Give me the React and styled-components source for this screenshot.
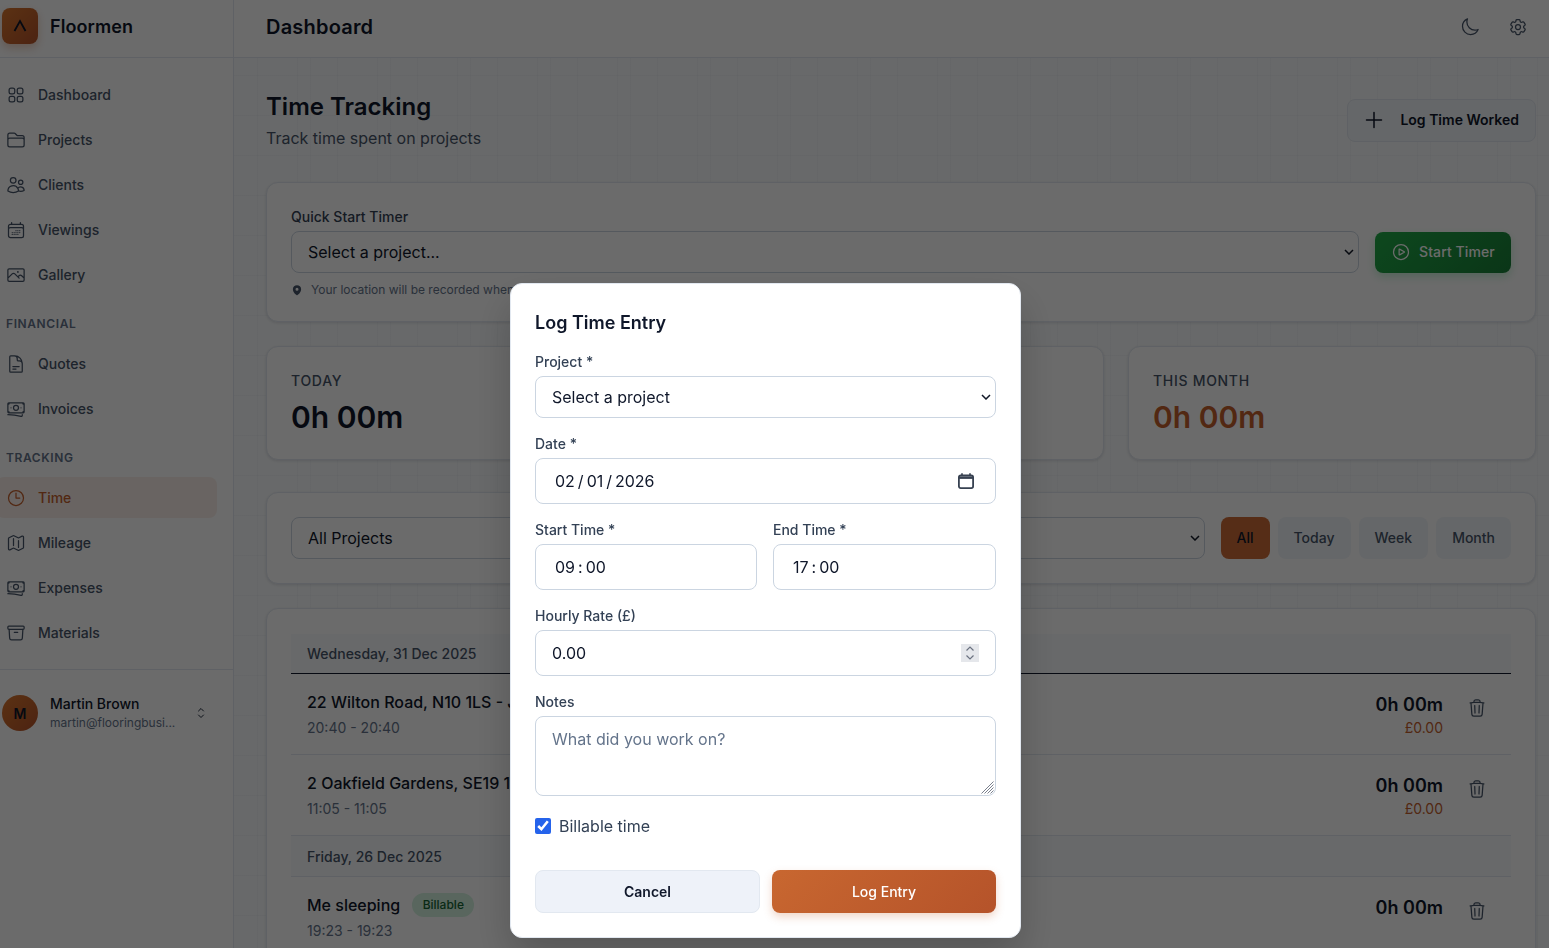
import React from 'react';
import styled, { createGlobalStyle } from 'styled-components';
import {
  HiOutlineSquares2X2, HiOutlineFolder, HiOutlineUsers, HiOutlineCalendarDays, HiOutlinePhoto,
  HiOutlineDocumentText, HiOutlineBanknotes, HiOutlineClock, HiOutlineMap, HiOutlineArchiveBox,
  HiOutlineMoon, HiOutlineCog6Tooth, HiOutlinePlus, HiOutlinePlayCircle, HiOutlineTrash,
  HiOutlineChevronUpDown, HiMapPin,
} from 'react-icons/hi2';

const chevron = `url("data:image/svg+xml,%3Csvg xmlns='http://www.w3.org/2000/svg' width='10' height='6' viewBox='0 0 10 6' fill='none' stroke='%23111827' stroke-width='1.5'%3E%3Cpath d='M1 1l4 4 4-4'/%3E%3C/svg%3E")`;

const Global = createGlobalStyle`
  html, body { margin: 0; padding: 0; height: 948px; overflow: hidden; background: #fff; }
  body { font-family: Inter, "Noto Sans", sans-serif; color: #0f172a; }
  * { box-sizing: border-box; }
  input, select, textarea, button { font-family: inherit; }
  #root { height: 948px; }
`;

const Shell = styled.div`display: flex; height: 948px; overflow: hidden;`;
const Sidebar = styled.aside`width: 234px; flex: none; border-right: 1px solid #e2e8f0; background: #fff; display: flex; flex-direction: column;`;
const Brand = styled.div`height: 58px; border-bottom: 1px solid #e2e8f0; padding: 8px 0 0 2px; display: flex; align-items: flex-start; gap: 12px;`;
const Logo = styled.div`width: 36px; height: 36px; border-radius: 8px; background: linear-gradient(135deg, #d9772f, #b5532a); box-shadow: 0 4px 8px rgba(196,96,45,.3); display: flex; align-items: center; justify-content: center; color: #0f172a;`;
const BrandName = styled.div`font-size: 18px; font-weight: 600; line-height: 38px; letter-spacing: .1px;`;
const Nav = styled.nav`padding: 16px 16px 12px 0; display: flex; flex-direction: column;`;
const NavItem = styled.div`
  display: flex; align-items: center; gap: 12px; height: 41px; margin: 0 0 4px -4px; padding-left: 10px;
  border-radius: 8px; font-size: 14px; font-weight: 500; line-height: 21px;
  color: ${p => p.$active ? '#c4602d' : '#475569'};
  background: ${p => p.$active ? 'rgba(196,96,45,.1)' : 'transparent'};
  svg { flex: none; font-size: 20px; }
`;
const NavHeading = styled.div`font-size: 12px; line-height: 16px; font-weight: 600; letter-spacing: .6px; text-transform: uppercase; color: #64748b; margin: 17px 0 11px 6px;`;
const UserBar = styled.div`border-top: 1px solid #e2e8f0; padding: 24px 0 0 2px; display: flex; align-items: center; gap: 12px;`;
const Avatar = styled.div`width: 36px; height: 36px; border-radius: 50%; background: linear-gradient(135deg, #d9772f, #b5532a); display: flex; align-items: center; justify-content: center; font-size: 14px; font-weight: 600; color: #0f172a;`;
const UserText = styled.div`width: 130px;`;
const UserName = styled.div`font-size: 14px; font-weight: 500; line-height: 20px;`;
const UserMail = styled.div`font-size: 12px; line-height: 18px; color: #64748b; white-space: nowrap;`;
const UserChevron = styled.div`display: flex; color: #1e293b; font-size: 16px; margin-left: 1px;`;

const Column = styled.div`flex: 1; min-width: 0; display: flex; flex-direction: column;`;
const TopBar = styled.header`height: 58px; flex: none; background: #fff; border-bottom: 1px solid #e2e8f0; padding: 0 21px 4px 32px; display: flex; align-items: center; justify-content: space-between;`;
const TopTitle = styled.div`font-size: 20px; font-weight: 600; line-height: 28px; color: #0f172a; letter-spacing: .2px;`;
const TopIcons = styled.div`display: flex; gap: 28px; color: #475569; font-size: 20px; svg { display: block; }`;
const Main = styled.main`
  flex: 1; padding: 32px 13px 0 32px; overflow: hidden; background-color: #f8fafc;
  background-image:
    linear-gradient(rgba(148,163,184,.06) 1px, transparent 1px),
    linear-gradient(90deg, rgba(148,163,184,.06) 1px, transparent 1px),
    linear-gradient(90deg, rgba(148,163,184,.06) 1px, transparent 1px);
  background-size: 40px 40px, 40px 40px, 80px 80px;
  background-position: 0 17px, 23px 0, 76px 0;
`;
const Head = styled.div`display: flex; justify-content: space-between; align-items: center; margin-bottom: 32px;`;
const H1 = styled.h1`margin: 1px 0 0; font-size: 24px; line-height: 32px; font-weight: 600; color: #0f172a;`;
const Sub = styled.p`margin: 3px 0 0; font-size: 16px; line-height: 24px; color: #475569;`;
const GhostButton = styled.button`
  display: flex; align-items: center; gap: 14px; height: 43px; padding: 0 16px 1px 14px; border-radius: 8px;
  border: 1px solid #e2e8f0; background: #f1f5f9; font-size: 14px; font-weight: 600; color: #0f172a;
  svg { font-size: 24px; }
`;
const Card = styled.section`background: #fff; border: 1px solid #e2e8f0; border-radius: 12px; box-shadow: 0 1px 3px rgba(15,23,42,.12); padding: 24px;`;
const TimerCard = styled(Card)`height: 140px; margin-bottom: 24px;`;
const FieldLabel = styled.div`font-size: 14px; line-height: 20px; font-weight: 500; color: #334155; margin-bottom: 4px;`;
const TimerRow = styled.div`display: flex; gap: 16px; align-items: center;`;
const selectBase = `
  appearance: none; height: 42px; padding: 0 24px 0 16px; border: 1px solid #cbd5e1; border-radius: 8px;
  background: #fff ${chevron} no-repeat right 4px center; font-size: 16px; color: #0f172a;
`;
const PageSelect = styled.select`flex: 1; min-width: 0; ${selectBase}`;
const StartButton = styled.button`
  flex: none; width: 136px; height: 41px; display: flex; align-items: center; gap: 8px; padding: 0 16px 1px; border: 0; border-radius: 8px;
  background: linear-gradient(135deg, #20ab48, #1a8038); box-shadow: 0 4px 8px rgba(34,197,94,.25); color: #fff; font-size: 14px; font-weight: 500; letter-spacing: .1px;
  svg { font-size: 20px; flex: none; }
`;
const Hint = styled.div`display: flex; align-items: center; gap: 8px; margin-top: 9px; font-size: 12px; line-height: 16px; color: #64748b; svg { font-size: 12px; color: #475569; }`;
const StatGrid = styled.div`display: grid; grid-template-columns: 407px 407px 1fr; gap: 24px; margin-bottom: 32px;`;
const StatCard = styled(Card)`height: 114px;`;
const StatLabel = styled.div`font-size: 14px; line-height: 20px; font-weight: 500; letter-spacing: .7px; text-transform: uppercase; color: #475569; margin-bottom: 8px;`;
const StatValue = styled.div`font-size: 30px; line-height: 36px; font-weight: 600; color: ${p => p.$accent ? '#c4602d' : '#0f172a'};`;
const FilterCard = styled(Card)`height: 92px; margin-bottom: 24px; display: flex; align-items: center; gap: 8px;`;
const FilterSelects = styled.div`flex: 1; display: flex; gap: 16px; margin-right: 8px;`;
const Chip = styled.button`
  flex: none; height: 42px; padding: 0 16px 1px; border: 0; border-radius: 8px; font-size: 14px; font-weight: 500; color: ${p => p.$on ? '#0f172a' : '#475569'};
  background: ${p => p.$on ? '#cd6d37' : '#f1f5f9'};
`;
const ListCard = styled(Card)`padding-top: 25px; height: 500px;`;
const DayHead = styled.div`height: ${p => p.$first ? 40 : 41}px; padding: 0 16px; display: flex; align-items: center; background: #f8fafc; border-bottom: 1px solid ${p => p.$first ? '#0f172a' : '#e2e8f0'}; font-size: 14px; font-weight: 500; color: #475569;`;
const Row = styled.div`height: 81px; padding: 16px 18px 16px 16px; border-bottom: 1px solid #e2e8f0; display: flex; justify-content: space-between; align-items: flex-start;`;
const RowTitle = styled.div`display: flex; align-items: center; gap: 12px; font-size: 16px; line-height: 24px; font-weight: 500; color: #0f172a;`;
const Badge = styled.span`font-size: 12px; line-height: 24px; font-weight: 500; padding: 0 10.5px; border-radius: 12px; color: #166534; background: rgba(34,197,94,.2);`;
const RowTime = styled.div`font-size: 14px; line-height: 20px; margin-top: 4px; color: #64748b;`;
const RowRight = styled.div`display: flex; align-items: flex-start; gap: 18px;`;
const Money = styled.div`text-align: right;`;
const Duration = styled.div`font-size: 18px; line-height: 28px; font-weight: 600; color: #0f172a; margin-top: 1px;`;
const Amount = styled.div`font-size: 14px; line-height: 20px; color: #c4602d; margin-top: -1px;`;
const Trash = styled.div`color: #475569; font-size: 20px; padding-top: 8px; margin: 0 6px; svg { display: block; }`;

const Overlay = styled.div`position: fixed; inset: 0; background: rgba(0,0,0,.58); backdrop-filter: blur(.6px); display: flex; align-items: flex-start; padding: 283px 0 0 510px;`;
const Dialog = styled.div`width: 511px; height: 655px; background: #fff; border: 1px solid #e2e8f0; border-radius: 12px; padding: 25px 24px 24px; box-shadow: 0 20px 40px rgba(0,0,0,.2);`;
const DialogTitle = styled.h2`margin: 0 0 15px; font-size: 18px; line-height: 28px; font-weight: 600; color: #0f172a;`;
const Field = styled.div`margin-bottom: 16px;`;
const TwoCols = styled.div`display: grid; grid-template-columns: 222px 223px; gap: 16px;`;
const DialogSelect = styled.select`display: block; width: 100%; ${selectBase}`;
const FakeInput = styled.div`
  display: flex; align-items: center; justify-content: space-between; height: 46px; padding: 0 21px 0 19px;
  border: 1px solid #cbd5e1; border-radius: 8px; background: #fff; font-size: 16px; color: #0f172a;
`;
const Segments = styled.div`display: flex; gap: 3px;`;
const CalendarIcon = styled.svg`flex: none; width: 16px; height: 16px; color: #374151;`;
const InputWrap = styled.div`position: relative;`;
const NumberInput = styled.input`
  display: block; width: 100%; height: 46px; padding: 0 16px; border: 1px solid #cbd5e1; border-radius: 8px; background: #fff; font-size: 16px; color: #0f172a;
  appearance: textfield;
  &::-webkit-inner-spin-button, &::-webkit-outer-spin-button { appearance: none; margin: 0; }
`;
const Spinner = styled.svg`position: absolute; right: 17px; top: 14px; width: 18px; height: 18px; background: #e5e7eb;`;
const Notes = styled.textarea`
  display: block; width: 100%; height: 80px; padding: 11px 16px; border: 1px solid #cbd5e1; border-radius: 8px; background: #fff; font-size: 16px; line-height: 22px; color: #0f172a; resize: none;
  &::placeholder { color: #64748b; }
`;
const Grip = styled.svg`position: absolute; right: 2px; bottom: 2px; width: 13px; height: 13px; pointer-events: none;`;
const CheckRow = styled.label`display: flex; align-items: center; gap: 8px; margin-top: 18px; font-size: 16px; line-height: 24px; color: #334155;`;
const Check = styled.input`width: 16px; height: 16px; margin: 0; accent-color: #2563eb;`;
const Buttons = styled.div`display: grid; grid-template-columns: 225px 224px; gap: 12px; margin-top: 32px;`;
const Cancel = styled.button`height: 43px; border: 1px solid #e2e8f0; border-radius: 8px; background: #eef2f9; font-size: 14px; font-weight: 600; color: #0f172a;`;
const Submit = styled.button`height: 43px; border: 0; border-radius: 8px; background: linear-gradient(135deg, #c86730, #b5532a); box-shadow: 0 4px 8px rgba(196,96,45,.25); font-size: 14px; font-weight: 500; color: #fff;`;

const LogoMark = () => (
  <svg width="16" height="16" viewBox="0 0 16 16" fill="none" stroke="currentColor" strokeWidth="1.8"><path d="M2.5 13 8 3l5.5 10" /></svg>
);

const main = [['Dashboard', HiOutlineSquares2X2], ['Projects', HiOutlineFolder], ['Clients', HiOutlineUsers], ['Viewings', HiOutlineCalendarDays], ['Gallery', HiOutlinePhoto]];
const fin = [['Quotes', HiOutlineDocumentText], ['Invoices', HiOutlineBanknotes]];
const track = [['Time', HiOutlineClock, true], ['Mileage', HiOutlineMap], ['Expenses', HiOutlineBanknotes], ['Materials', HiOutlineArchiveBox]];

const Items = ({ list }) => list.map(([label, Icon, active]) => (
  <NavItem key={label} $active={active}><Icon />{label}</NavItem>
));

const Entry = ({ title, time, amount, billable }) => (
  <Row>
    <div>
      <RowTitle>{title}{billable && <Badge>Billable</Badge>}</RowTitle>
      <RowTime>{time}</RowTime>
    </div>
    <RowRight>
      <Money>
        <Duration>0h 00m</Duration>
        {amount && <Amount>{amount}</Amount>}
      </Money>
      <Trash><HiOutlineTrash /></Trash>
    </RowRight>
  </Row>
);

const TimeInput = ({ hours, minutes }) => (
  <FakeInput><Segments><span>{hours}</span><span>:</span><span>{minutes}</span></Segments></FakeInput>
);

export default function App() {
  return (
    <>
      <Global />
      <Shell>
        <Sidebar>
          <Brand><Logo><LogoMark /></Logo><BrandName>Floormen</BrandName></Brand>
          <Nav>
            <Items list={main} />
            <NavHeading>Financial</NavHeading>
            <Items list={fin} />
            <NavHeading>Tracking</NavHeading>
            <Items list={track} />
          </Nav>
          <UserBar>
            <Avatar>M</Avatar>
            <UserText>
              <UserName>Martin Brown</UserName>
              <UserMail>martin@flooringbusi...</UserMail>
            </UserText>
            <UserChevron><HiOutlineChevronUpDown /></UserChevron>
          </UserBar>
        </Sidebar>
        <Column>
          <TopBar>
            <TopTitle>Dashboard</TopTitle>
            <TopIcons><HiOutlineMoon /><HiOutlineCog6Tooth /></TopIcons>
          </TopBar>
          <Main>
            <Head>
              <div>
                <H1>Time Tracking</H1>
                <Sub>Track time spent on projects</Sub>
              </div>
              <GhostButton><HiOutlinePlus />Log Time Worked</GhostButton>
            </Head>
            <TimerCard>
              <FieldLabel>Quick Start Timer</FieldLabel>
              <TimerRow>
                <PageSelect defaultValue=""><option value="">Select a project...</option></PageSelect>
                <StartButton><HiOutlinePlayCircle />Start Timer</StartButton>
              </TimerRow>
              <Hint><HiMapPin />Your location will be recorded when you start the timer</Hint>
            </TimerCard>
            <StatGrid>
              <StatCard><StatLabel>Today</StatLabel><StatValue>0h 00m</StatValue></StatCard>
              <StatCard><StatLabel>This Week</StatLabel><StatValue>0h 00m</StatValue></StatCard>
              <StatCard><StatLabel>This Month</StatLabel><StatValue $accent>0h 00m</StatValue></StatCard>
            </StatGrid>
            <FilterCard>
              <FilterSelects>
                <PageSelect><option>All Projects</option></PageSelect>
                <PageSelect><option>All Clients</option></PageSelect>
              </FilterSelects>
              <Chip $on>All</Chip><Chip>Today</Chip><Chip>Week</Chip><Chip>Month</Chip>
            </FilterCard>
            <ListCard>
              <DayHead $first>Wednesday, 31 Dec 2025</DayHead>
              <Entry title="22 Wilton Road, N10 1LS - Job" time="20:40 - 20:40" amount="£0.00" />
              <Entry title="2 Oakfield Gardens, SE19 1HQ" time="11:05 - 11:05" amount="£0.00" />
              <DayHead>Friday, 26 Dec 2025</DayHead>
              <Entry title="Me sleeping" time="19:23 - 19:23" billable />
            </ListCard>
          </Main>
        </Column>
      </Shell>
      <Overlay>
        <Dialog>
          <DialogTitle>Log Time Entry</DialogTitle>
          <Field>
            <FieldLabel>Project *</FieldLabel>
            <DialogSelect defaultValue=""><option value="">Select a project</option></DialogSelect>
          </Field>
          <Field>
            <FieldLabel>Date *</FieldLabel>
            <FakeInput>
              <Segments><span>02</span><span>/</span><span>01</span><span>/</span><span>2026</span></Segments>
              <CalendarIcon viewBox="0 0 16 16" fill="none" stroke="currentColor">
                <rect x="0.9" y="2.4" width="14.2" height="12.7" rx="1.8" strokeWidth="1.8" />
                <path d="M1 4.6h14" strokeWidth="2.6" />
                <path d="M4 0.3v2.5M12 0.3v2.5" strokeWidth="1.6" />
              </CalendarIcon>
            </FakeInput>
          </Field>
          <TwoCols>
            <Field>
              <FieldLabel>Start Time *</FieldLabel>
              <TimeInput hours="09" minutes="00" />
            </Field>
            <Field>
              <FieldLabel>End Time *</FieldLabel>
              <TimeInput hours="17" minutes="00" />
            </Field>
          </TwoCols>
          <Field>
            <FieldLabel>Hourly Rate (£)</FieldLabel>
            <InputWrap>
              <NumberInput type="number" step="0.01" defaultValue="0.00" />
              <Spinner viewBox="0 0 18 18" fill="none" stroke="#6b7280" strokeWidth="1.2">
                <path d="M5.5 6.5 9 3l3.5 3.5M5.5 11.5 9 15l3.5-3.5" />
              </Spinner>
            </InputWrap>
          </Field>
          <div>
            <FieldLabel>Notes</FieldLabel>
            <InputWrap>
              <Notes placeholder="What did you work on?" />
              <Grip viewBox="0 0 13 13" stroke="#6b7280" strokeWidth="0.9">
                <path d="M12.5.5.5 12.5M12.5 3.5 3.5 12.5M12.5 6.5 6.5 12.5M12.5 9.5 9.5 12.5" />
              </Grip>
            </InputWrap>
          </div>
          <CheckRow><Check type="checkbox" defaultChecked />Billable time</CheckRow>
          <Buttons>
            <Cancel>Cancel</Cancel>
            <Submit>Log Entry</Submit>
          </Buttons>
        </Dialog>
      </Overlay>
    </>
  );
}
